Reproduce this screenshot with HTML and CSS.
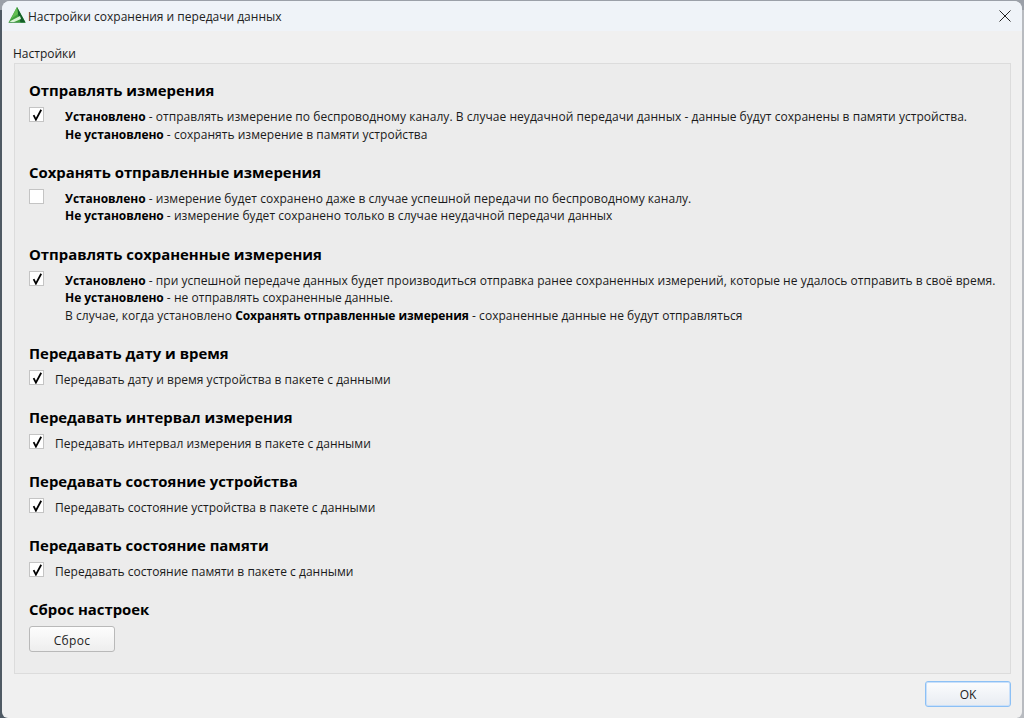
FILE: index.html
```html
<!DOCTYPE html>
<html lang="ru">
<head>
<meta charset="utf-8">
<title>Настройки сохранения и передачи данных</title>
<link rel="stylesheet" href="styles.css">
</head>
<body>
<div class="window">
  <header class="titlebar">
    <svg class="app-icon" viewBox="0 0 18 18" width="18" height="18">
      <polygon points="9,0 17.5,15.5 0.5,15.5" fill="#3f9f3c"/>
      <polygon points="9,0 17.5,15.5 12.5,15.5 10,7" fill="#14602a"/>
      <polygon points="9,0 10,7 3,12" fill="#63bd52"/>
      <polygon points="1.5,14.5 12,9 13,12 5,15.5" fill="#d9f3d6"/>
      <polygon points="0.5,15.5 17.5,15.5 17,16 1,16" fill="#1f7a33"/>
    </svg>
    <span class="title">Настройки сохранения и передачи данных</span>
    <svg class="close" viewBox="0 0 12 12" width="12" height="12"><path d="M0.5 0.5L11.5 11.5M11.5 0.5L0.5 11.5" stroke="#222" stroke-width="1" fill="none"/></svg>
  </header>
  <main class="content">
    <div class="group-label">Настройки</div>
    <div class="panel">
      <section class="sec sec-long">
        <h2>Отправлять измерения</h2>
        <div class="row">
          <span class="cb on"><svg viewBox="0 0 13 13"><path d="M3.6 7.2L5.9 11.6L11.2 1.8" /></svg></span>
          <p class="desc"><b>Установлено</b> - отправлять измерение по беспроводному каналу. В случае неудачной передачи данных - данные будут сохранены в памяти устройства.<br><b>Не установлено</b> - сохранять измерение в памяти устройства</p>
        </div>
      </section>
      <section class="sec sec-long">
        <h2>Сохранять отправленные измерения</h2>
        <div class="row">
          <span class="cb"></span>
          <p class="desc"><b>Установлено</b> - измерение будет сохранено даже в случае успешной передачи по беспроводному каналу.<br><b>Не установлено</b> - измерение будет сохранено только в случае неудачной передачи данных</p>
        </div>
      </section>
      <section class="sec sec-long">
        <h2>Отправлять сохраненные измерения</h2>
        <div class="row">
          <span class="cb on"><svg viewBox="0 0 13 13"><path d="M3.6 7.2L5.9 11.6L11.2 1.8" /></svg></span>
          <p class="desc"><b>Установлено</b> - при успешной передаче данных будет производиться отправка ранее сохраненных измерений, которые не удалось отправить в своё время.<br><b>Не установлено</b> - не отправлять сохраненные данные.<br>В случае, когда установлено <b>Сохранять отправленные измерения</b> - сохраненные данные не будут отправляться</p>
        </div>
      </section>
      <section class="sec">
        <h2>Передавать дату и время</h2>
        <div class="row short">
          <span class="cb on"><svg viewBox="0 0 13 13"><path d="M3.6 7.2L5.9 11.6L11.2 1.8" /></svg></span>
          <p class="desc">Передавать дату и время устройства в пакете с данными</p>
        </div>
      </section>
      <section class="sec">
        <h2>Передавать интервал измерения</h2>
        <div class="row short">
          <span class="cb on"><svg viewBox="0 0 13 13"><path d="M3.6 7.2L5.9 11.6L11.2 1.8" /></svg></span>
          <p class="desc">Передавать интервал измерения в пакете с данными</p>
        </div>
      </section>
      <section class="sec">
        <h2>Передавать состояние устройства</h2>
        <div class="row short">
          <span class="cb on"><svg viewBox="0 0 13 13"><path d="M3.6 7.2L5.9 11.6L11.2 1.8" /></svg></span>
          <p class="desc">Передавать состояние устройства в пакете с данными</p>
        </div>
      </section>
      <section class="sec">
        <h2>Передавать состояние памяти</h2>
        <div class="row short">
          <span class="cb on"><svg viewBox="0 0 13 13"><path d="M3.6 7.2L5.9 11.6L11.2 1.8" /></svg></span>
          <p class="desc">Передавать состояние памяти в пакете с данными</p>
        </div>
      </section>
      <section class="sec">
        <h2>Сброс настроек</h2>
        <button class="btn reset" type="button">Сброс</button>
      </section>
    </div>
    <div class="footer"><button class="btn ok" type="button">OK</button></div>
  </main>
</div>
</body>
</html>
```
FILE: styles.css
```css
* { box-sizing: border-box; }
html, body { margin: 0; height: 100%; }
body {
  background: linear-gradient(#9ba0a8 0 10px, transparent 10px), linear-gradient(90deg, #4f5a64 50%, #b8bbc0 50%);
  padding: 1px 2px 0 2px;
  font-family: "Open Sans", "Noto Sans", sans-serif;
  font-size: 12px;
  color: #1a1a1a;
  overflow: hidden;
}
.window {
  height: 717px;
  border-radius: 8px 8px 6px 6px;
  background: #f0f0f0;
  overflow: hidden;
  display: flex;
  flex-direction: column;
}
.titlebar {
  height: 30px;
  flex: none;
  background: #eff3f8;
  display: flex;
  align-items: center;
  padding: 0 11px 0 6px;
}
.app-icon { flex: none; }
.title { margin-left: 2px; font-size: 12px; color: #222; flex: 1; }
.close { flex: none; margin-top: -1px; }
.content { flex: 1; display: flex; flex-direction: column; padding: 0 11px 0 12px; }
.group-label { height: 32px; padding-top: 15px; line-height: 16px; font-size: 12px; margin-left: -1px; }
.panel {
  height: 611px;
  border: 1px solid #dcdcdc;
  background: #ececec;
  padding: 16px 14px 0 14px;
  flex: none;
}
.sec { margin-bottom: 19px; }
.sec-long { margin-bottom: 18.75px; }
.sec h2 { margin: 0; font-size: 14.9px; font-weight: 700; line-height: 20px; color: #000; }
.row { display: flex; align-items: flex-start; margin-top: 7px; }
.cb {
  flex: none;
  width: 15px;
  height: 15px;
  background: #fff;
  border: 1px solid #c4c4c4;
  display: block;
}
.cb svg { display: block; width: 13px; height: 13px; }
.cb svg path { fill: none; stroke: #000; stroke-width: 1.8; }
.desc { margin: 0 0 0 21px; padding-top: 1px; line-height: 17.5px; font-size: 12px; letter-spacing: 0.04px; white-space: nowrap; }
.short .desc { margin-left: 11px; line-height: 17px; letter-spacing: 0.02px; }
.desc b { color: #000; letter-spacing: -0.05px; }
.btn {
  font: inherit;
  color: #222;
  border: 1px solid #b9b9b9;
  border-radius: 3px;
  background: linear-gradient(#fdfdfd, #eeeeee);
  padding: 3px 0 0;
}
.reset { width: 86px; height: 26px; display: block; margin-top: 7px; letter-spacing: 0.3px; }
.footer { display: flex; justify-content: flex-end; margin-top: 7px; }
.ok { width: 86px; height: 26px; border-color: #8cc0f5; box-shadow: inset 0 0 0 1px #c9e0fa; background: linear-gradient(#fbfcfe, #e8ecf2); padding-top: 0; }
```
